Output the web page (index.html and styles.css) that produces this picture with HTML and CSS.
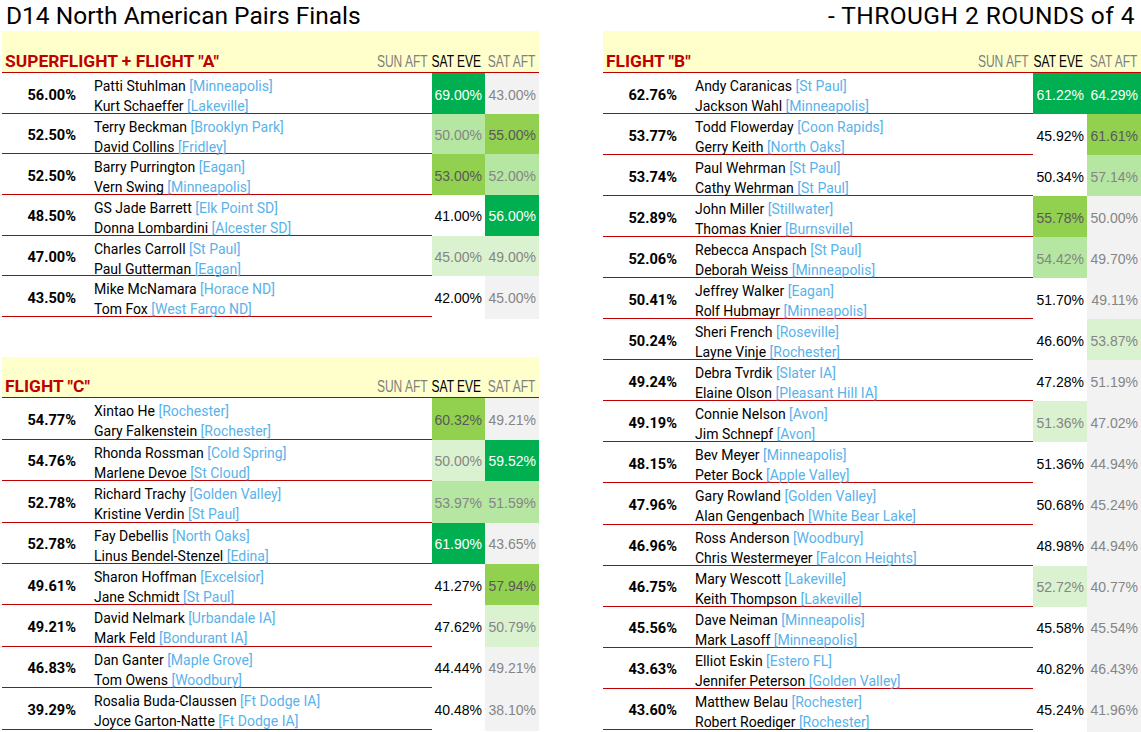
FILE: index.html
```html
<!DOCTYPE html>
<html>
<head>
<meta charset="utf-8">
<link rel="stylesheet" href="styles.css">
</head>
<body>
<div class="page">
  <div class="col left">
    <div class="title">D14 North American Pairs Finals</div>
    <div class="section sec-a">
      <div class="head">
        <div class="sname">SUPERFLIGHT + FLIGHT "A"</div>
        <div class="lab lab-g"><span>SUN AFT</span></div>
        <div class="lab"><span>SAT EVE</span></div>
        <div class="lab lab-g"><span>SAT AFT</span></div>
      </div>
      <div class="row"><div class="tot">56.00%</div><div class="names"><div>Patti Stuhlman <span class="city">[Minneapolis]</span></div><div>Kurt Schaeffer <span class="city">[Lakeville]</span></div></div><div class="sun"></div><div class="eve dg">69.00%</div><div class="aft">43.00%</div></div>
      <div class="row"><div class="tot">52.50%</div><div class="names"><div>Terry Beckman <span class="city">[Brooklyn Park]</span></div><div>David Collins <span class="city">[Fridley]</span></div></div><div class="sun"></div><div class="eve lg">50.00%</div><div class="aft mg">55.00%</div></div>
      <div class="row"><div class="tot">52.50%</div><div class="names"><div>Barry Purrington <span class="city">[Eagan]</span></div><div>Vern Swing <span class="city">[Minneapolis]</span></div></div><div class="sun"></div><div class="eve mg">53.00%</div><div class="aft lg">52.00%</div></div>
      <div class="row"><div class="tot">48.50%</div><div class="names"><div>GS Jade Barrett <span class="city">[Elk Point SD]</span></div><div>Donna Lombardini <span class="city">[Alcester SD]</span></div></div><div class="sun"></div><div class="eve">41.00%</div><div class="aft dg">56.00%</div></div>
      <div class="row"><div class="tot">47.00%</div><div class="names"><div>Charles Carroll <span class="city">[St Paul]</span></div><div>Paul Gutterman <span class="city">[Eagan]</span></div></div><div class="sun"></div><div class="eve vl">45.00%</div><div class="aft vl">49.00%</div></div>
      <div class="row"><div class="tot">43.50%</div><div class="names"><div>Mike McNamara <span class="city">[Horace ND]</span></div><div>Tom Fox <span class="city">[West Fargo ND]</span></div></div><div class="sun"></div><div class="eve">42.00%</div><div class="aft">45.00%</div></div>
    </div>
    <div class="section sec-c">
      <div class="head">
        <div class="sname">FLIGHT "C"</div>
        <div class="lab lab-g"><span>SUN AFT</span></div>
        <div class="lab"><span>SAT EVE</span></div>
        <div class="lab lab-g"><span>SAT AFT</span></div>
      </div>
      <div class="row"><div class="tot">54.77%</div><div class="names"><div>Xintao He <span class="city">[Rochester]</span></div><div>Gary Falkenstein <span class="city">[Rochester]</span></div></div><div class="sun"></div><div class="eve mg">60.32%</div><div class="aft">49.21%</div></div>
      <div class="row"><div class="tot">54.76%</div><div class="names"><div>Rhonda Rossman <span class="city">[Cold Spring]</span></div><div>Marlene Devoe <span class="city">[St Cloud]</span></div></div><div class="sun"></div><div class="eve vl">50.00%</div><div class="aft dg">59.52%</div></div>
      <div class="row"><div class="tot">52.78%</div><div class="names"><div>Richard Trachy <span class="city">[Golden Valley]</span></div><div>Kristine Verdin <span class="city">[St Paul]</span></div></div><div class="sun"></div><div class="eve lg">53.97%</div><div class="aft lg">51.59%</div></div>
      <div class="row"><div class="tot">52.78%</div><div class="names"><div>Fay Debellis <span class="city">[North Oaks]</span></div><div>Linus Bendel-Stenzel <span class="city">[Edina]</span></div></div><div class="sun"></div><div class="eve dg">61.90%</div><div class="aft">43.65%</div></div>
      <div class="row"><div class="tot">49.61%</div><div class="names"><div>Sharon Hoffman <span class="city">[Excelsior]</span></div><div>Jane Schmidt <span class="city">[St Paul]</span></div></div><div class="sun"></div><div class="eve">41.27%</div><div class="aft mg">57.94%</div></div>
      <div class="row"><div class="tot">49.21%</div><div class="names"><div>David Nelmark <span class="city">[Urbandale IA]</span></div><div>Mark Feld <span class="city">[Bondurant IA]</span></div></div><div class="sun"></div><div class="eve">47.62%</div><div class="aft vl">50.79%</div></div>
      <div class="row"><div class="tot">46.83%</div><div class="names"><div>Dan Ganter <span class="city">[Maple Grove]</span></div><div>Tom Owens <span class="city">[Woodbury]</span></div></div><div class="sun"></div><div class="eve">44.44%</div><div class="aft">49.21%</div></div>
      <div class="row"><div class="tot">39.29%</div><div class="names"><div>Rosalia Buda-Claussen <span class="city">[Ft Dodge IA]</span></div><div>Joyce Garton-Natte <span class="city">[Ft Dodge IA]</span></div></div><div class="sun"></div><div class="eve">40.48%</div><div class="aft">38.10%</div></div>
    </div>
  </div>
  <div class="col right">
    <div class="title title-r">- THROUGH 2 ROUNDS of 4</div>
    <div class="section sec-b">
      <div class="head">
        <div class="sname">FLIGHT "B"</div>
        <div class="lab lab-g"><span>SUN AFT</span></div>
        <div class="lab"><span>SAT EVE</span></div>
        <div class="lab lab-g"><span>SAT AFT</span></div>
      </div>
      <div class="row"><div class="tot">62.76%</div><div class="names"><div>Andy Caranicas <span class="city">[St Paul]</span></div><div>Jackson Wahl <span class="city">[Minneapolis]</span></div></div><div class="sun"></div><div class="eve dg">61.22%</div><div class="aft dg">64.29%</div></div>
      <div class="row"><div class="tot">53.77%</div><div class="names"><div>Todd Flowerday <span class="city">[Coon Rapids]</span></div><div>Gerry Keith <span class="city">[North Oaks]</span></div></div><div class="sun"></div><div class="eve">45.92%</div><div class="aft mg">61.61%</div></div>
      <div class="row"><div class="tot">53.74%</div><div class="names"><div>Paul Wehrman <span class="city">[St Paul]</span></div><div>Cathy Wehrman <span class="city">[St Paul]</span></div></div><div class="sun"></div><div class="eve">50.34%</div><div class="aft lg">57.14%</div></div>
      <div class="row"><div class="tot">52.89%</div><div class="names"><div>John Miller <span class="city">[Stillwater]</span></div><div>Thomas Knier <span class="city">[Burnsville]</span></div></div><div class="sun"></div><div class="eve mg">55.78%</div><div class="aft">50.00%</div></div>
      <div class="row"><div class="tot">52.06%</div><div class="names"><div>Rebecca Anspach <span class="city">[St Paul]</span></div><div>Deborah Weiss <span class="city">[Minneapolis]</span></div></div><div class="sun"></div><div class="eve lg">54.42%</div><div class="aft">49.70%</div></div>
      <div class="row"><div class="tot">50.41%</div><div class="names"><div>Jeffrey Walker <span class="city">[Eagan]</span></div><div>Rolf Hubmayr <span class="city">[Minneapolis]</span></div></div><div class="sun"></div><div class="eve">51.70%</div><div class="aft">49.11%</div></div>
      <div class="row"><div class="tot">50.24%</div><div class="names"><div>Sheri French <span class="city">[Roseville]</span></div><div>Layne Vinje <span class="city">[Rochester]</span></div></div><div class="sun"></div><div class="eve">46.60%</div><div class="aft vl">53.87%</div></div>
      <div class="row"><div class="tot">49.24%</div><div class="names"><div>Debra Tvrdik <span class="city">[Slater IA]</span></div><div>Elaine Olson <span class="city">[Pleasant Hill IA]</span></div></div><div class="sun"></div><div class="eve">47.28%</div><div class="aft">51.19%</div></div>
      <div class="row"><div class="tot">49.19%</div><div class="names"><div>Connie Nelson <span class="city">[Avon]</span></div><div>Jim Schnepf <span class="city">[Avon]</span></div></div><div class="sun"></div><div class="eve vl">51.36%</div><div class="aft">47.02%</div></div>
      <div class="row"><div class="tot">48.15%</div><div class="names"><div>Bev Meyer <span class="city">[Minneapolis]</span></div><div>Peter Bock <span class="city">[Apple Valley]</span></div></div><div class="sun"></div><div class="eve">51.36%</div><div class="aft">44.94%</div></div>
      <div class="row"><div class="tot">47.96%</div><div class="names"><div>Gary Rowland <span class="city">[Golden Valley]</span></div><div>Alan Gengenbach <span class="city">[White Bear Lake]</span></div></div><div class="sun"></div><div class="eve">50.68%</div><div class="aft">45.24%</div></div>
      <div class="row"><div class="tot">46.96%</div><div class="names"><div>Ross Anderson <span class="city">[Woodbury]</span></div><div>Chris Westermeyer <span class="city">[Falcon Heights]</span></div></div><div class="sun"></div><div class="eve">48.98%</div><div class="aft">44.94%</div></div>
      <div class="row"><div class="tot">46.75%</div><div class="names"><div>Mary Wescott <span class="city">[Lakeville]</span></div><div>Keith Thompson <span class="city">[Lakeville]</span></div></div><div class="sun"></div><div class="eve vl">52.72%</div><div class="aft">40.77%</div></div>
      <div class="row"><div class="tot">45.56%</div><div class="names"><div>Dave Neiman <span class="city">[Minneapolis]</span></div><div>Mark Lasoff <span class="city">[Minneapolis]</span></div></div><div class="sun"></div><div class="eve">45.58%</div><div class="aft">45.54%</div></div>
      <div class="row"><div class="tot">43.63%</div><div class="names"><div>Elliot Eskin <span class="city">[Estero FL]</span></div><div>Jennifer Peterson <span class="city">[Golden Valley]</span></div></div><div class="sun"></div><div class="eve">40.82%</div><div class="aft">46.43%</div></div>
      <div class="row"><div class="tot">43.60%</div><div class="names"><div>Matthew Belau <span class="city">[Rochester]</span></div><div>Robert Roediger <span class="city">[Rochester]</span></div></div><div class="sun"></div><div class="eve">45.24%</div><div class="aft">41.96%</div></div>
    </div>
  </div>
</div>
</body>
</html>
```

FILE: styles.css
```css
* { box-sizing: border-box; }
html, body { margin: 0; padding: 0; background: #fff; }
body {
  font-family: Roboto, "Liberation Sans", sans-serif;
  color: #000;
  width: 1141px;
  height: 732px;
  overflow: hidden;
}
.page {
  display: grid;
  grid-template-columns: 537px 538px;
  column-gap: 64px;
  padding-left: 2px;
}
.col { display: flex; flex-direction: column; }
.title {
  height: 31px;
  font-size: 24.5px;
  line-height: 31px;
  padding-left: 4px;
  white-space: nowrap;
}
.title-r { text-align: right; padding-right: 6px; letter-spacing: 0.45px; }

.section { display: flex; flex-direction: column; }
.sec-c { margin-top: 40px; }

.head {
  display: grid;
  align-items: end;
  background: #ffffcc;
  border-bottom: 1px solid #c00000;
  height: 42px;
  padding-bottom: 0;
}
.sec-c .head { height: 41.5px; }
.left .head, .left .row { grid-template-columns: 78px 1fr 52px 53px 54px; }
.right .head, .right .row { grid-template-columns: 78px 1fr 52px 54px 54px; }

.sname {
  grid-column: 1 / 3;
  color: #c00000;
  font-weight: 700;
  font-size: 17.4px;
  line-height: 21px;
  padding-left: 3px;
}
.lab {
  display: flex;
  justify-content: flex-end;
  font-family: "Liberation Sans", Arial, sans-serif;
  font-size: 16px;
  line-height: 20px;
  padding-right: 4px;
  white-space: nowrap;
  color: #000;
  min-width: 0;
}
.lab span {
  flex: none;
  display: block;
  transform: scaleX(0.75);
  transform-origin: 100% 50%;
}
.lab-g { color: #7f7f7f; }

.row {
  display: grid;
  border-bottom: 1px solid #c00000;
  height: 41px;
}
.sec-a .row { height: 40.67px; }
.sec-c .row { height: 41.4px; }
.sec-b .row { height: 41.06px; }

.tot {
  display: flex;
  align-items: center;
  justify-content: flex-end;
  padding-right: 4px;
  font-weight: 700;
  font-size: 14.6px;
}
.names {
  padding-left: 14px;
  padding-top: 3px;
  font-size: 14px;
  line-height: 20px;
  white-space: nowrap;
}
.city { color: #5ab2ea; }

.sun, .eve, .aft {
  display: flex;
  align-items: center;
  justify-content: flex-end;
  padding-right: 3px;
  font-family: "Liberation Sans", Arial, sans-serif;
  font-size: 14px;
}
.eve { background: #fff; color: #000; }
.aft { background: #f2f2f2; color: #858585; }
.dg { background: #00b050; color: #fff; }
.mg { background: #92d050; color: #595959; }
.lg { background: #b5e6a2; color: #858585; }
.vl { background: #daf2d0; color: #858585; }
```
